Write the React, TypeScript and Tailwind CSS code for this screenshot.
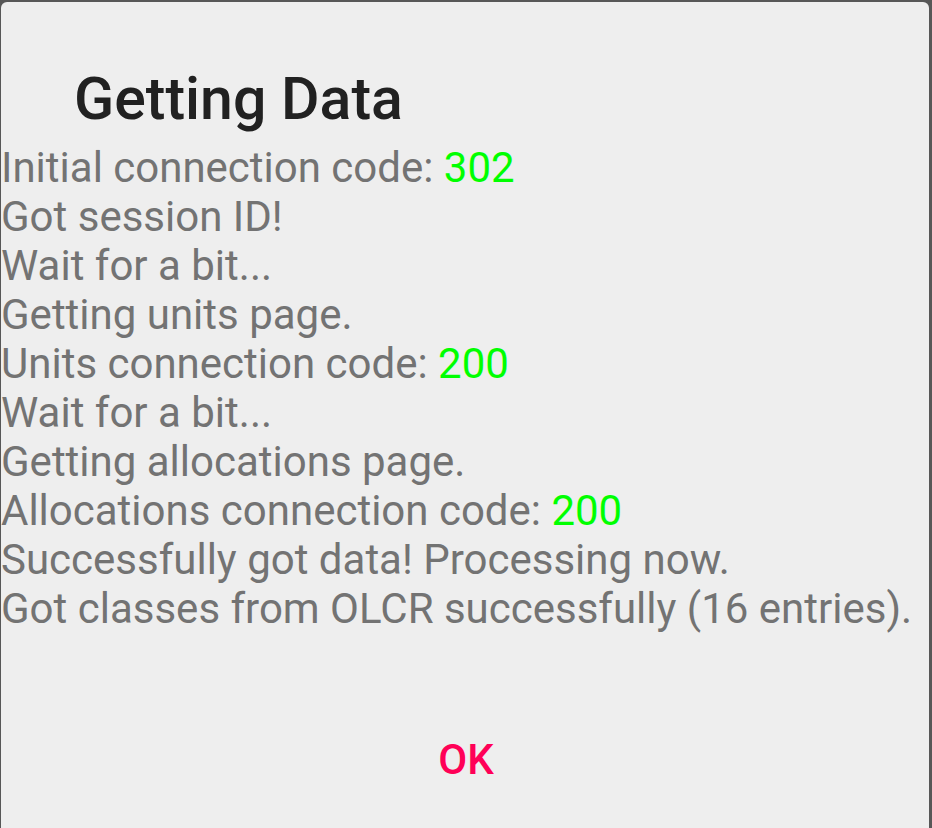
import React from "react";

const lines: { t: string; code?: string }[] = [
  { t: "Initial connection code: ", code: "302" },
  { t: "Got session ID!" },
  { t: "Wait for a bit..." },
  { t: "Getting units page." },
  { t: "Units connection code: ", code: "200" },
  { t: "Wait for a bit..." },
  { t: "Getting allocations page." },
  { t: "Allocations connection code: ", code: "200" },
  { t: "Successfully got data! Processing now." },
  { t: "Got classes from OLCR successfully (16 entries)." },
];

export default function App() {
  return (
    <div
      className="w-[932px] h-[828px] bg-[#575757] pt-[2px] pl-[1px] pr-[3px] overflow-hidden"
      style={{ fontFamily: "Roboto, 'Liberation Sans', sans-serif" }}
    >
      <div className="h-full bg-[#eeeeee] rounded-t-[6px] flex flex-col">
        <div className="pl-[73px] pt-[63px] text-[59px] leading-[68px] font-medium text-[#212121]">
          Getting Data
        </div>
        <div className="mt-[10px] text-[42px] leading-[49px] text-[#737373] whitespace-nowrap">
          {lines.map((l, i) => (
            <div key={i}>
              {l.t}
              {l.code && <span className="text-[#00ff00]">{l.code}</span>}
            </div>
          ))}
        </div>
        <div className="flex justify-center mt-[102px] pl-[2px]">
          <span className="text-[42px] leading-[50px] font-medium text-[#ff0057]">OK</span>
        </div>
      </div>
    </div>
  );
}
